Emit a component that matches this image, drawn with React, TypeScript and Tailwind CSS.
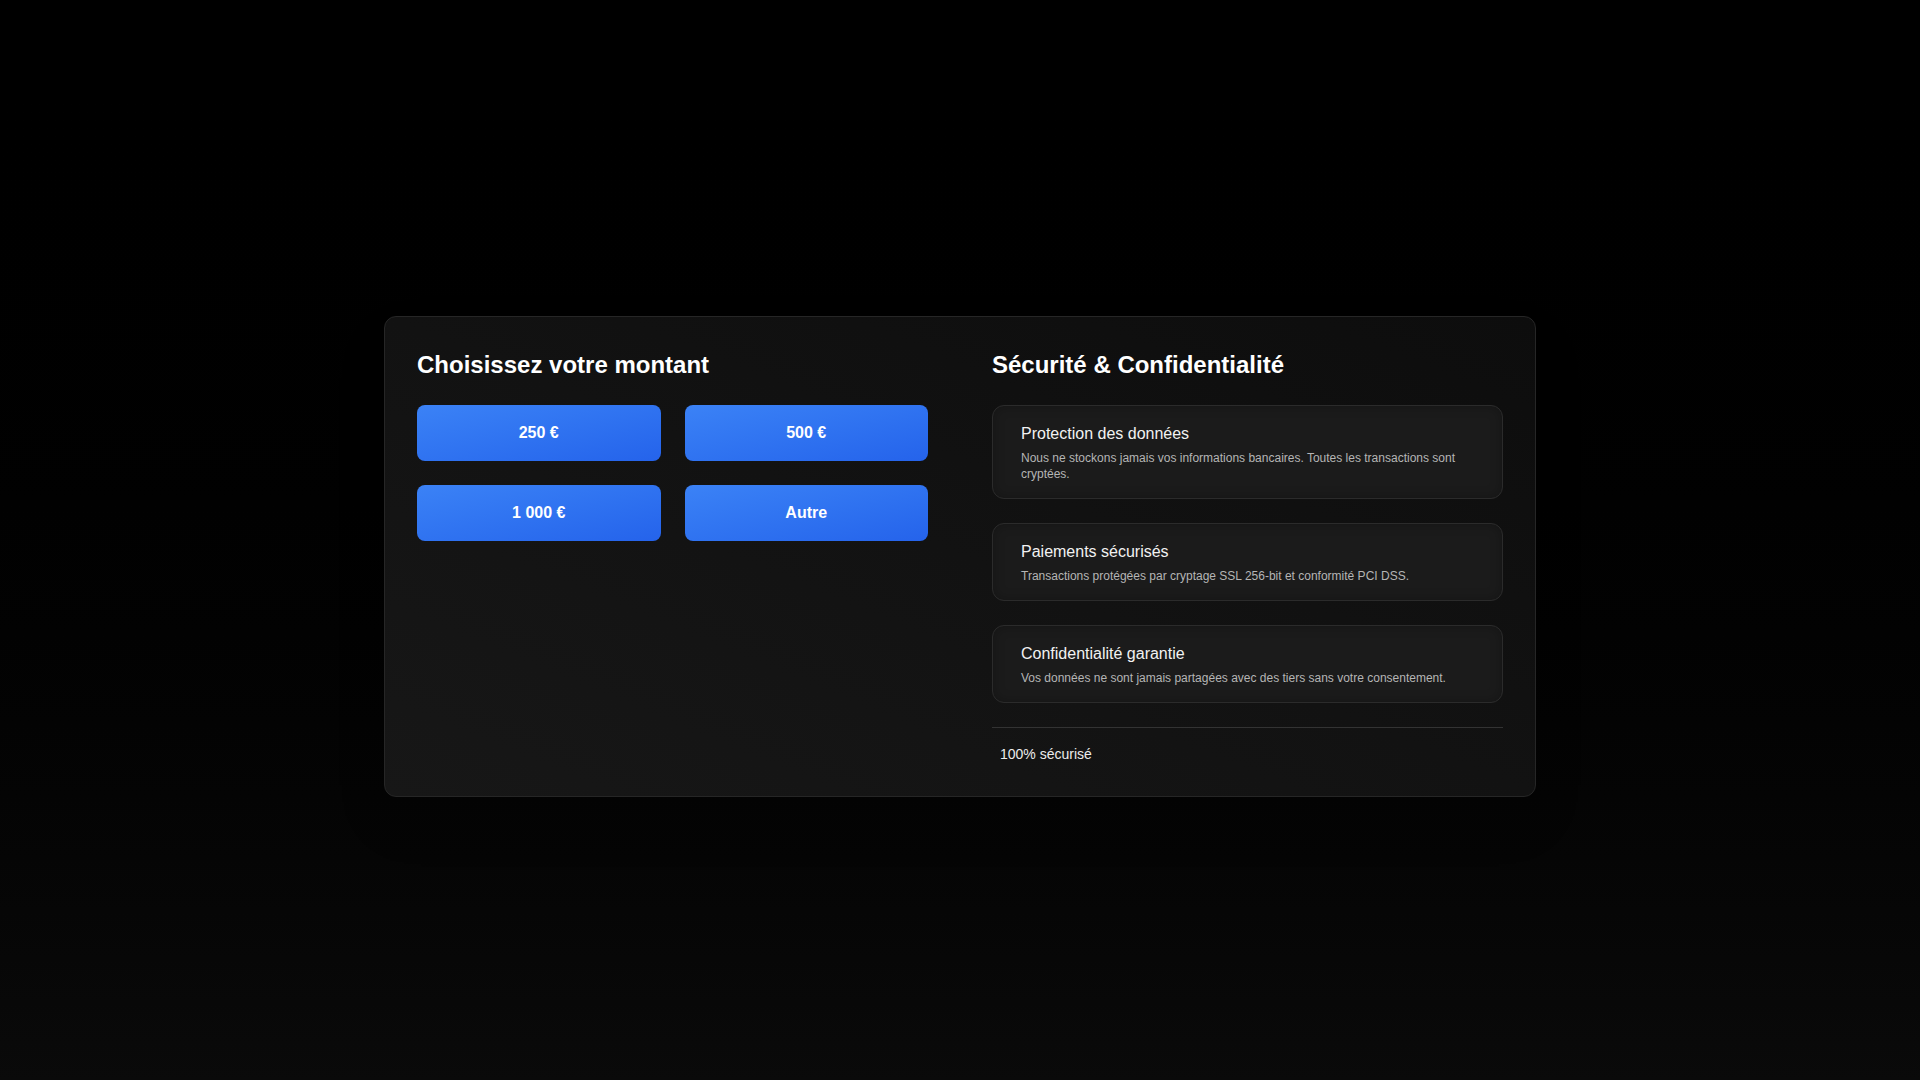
import React from "react";

const amounts = ["250 €", "500 €", "1 000 €", "Autre"];

const features = [
  {
    title: "Protection des données",
    desc: "Nous ne stockons jamais vos informations bancaires. Toutes les transactions sont cryptées.",
  },
  {
    title: "Paiements sécurisés",
    desc: "Transactions protégées par cryptage SSL 256-bit et conformité PCI DSS.",
  },
  {
    title: "Confidentialité garantie",
    desc: "Vos données ne sont jamais partagées avec des tiers sans votre consentement.",
  },
];

export default function App() {
  return (
    <div
      className="min-h-screen w-full bg-gradient-to-b from-[#000000] to-[#0a0a0a] flex items-center justify-center pt-8"
      style={{ fontFamily: '"Liberation Sans", Arial, sans-serif' }}
    >
      <div className="w-[1152px] rounded-xl border border-[#262626] bg-gradient-to-bl from-[#0d0d0d] via-[#121212] to-[#171717] p-8 shadow-2xl">
        <div className="grid grid-cols-2 gap-16">
          <div>
            <h2 className="text-2xl font-bold text-white mb-6">Choisissez votre montant</h2>
            <div className="grid grid-cols-2 gap-6">
              {amounts.map((a) => (
                <button
                  key={a}
                  className="py-4 rounded-lg bg-gradient-to-br from-[#3b82f6] to-[#2563eb] text-white text-base font-bold leading-6"
                >
                  {a}
                </button>
              ))}
            </div>
          </div>
          <div>
            <h2 className="text-2xl font-bold text-white mb-6">Sécurité &amp; Confidentialité</h2>
            <div className="flex flex-col gap-6">
              {features.map((f) => (
                <div
                  key={f.title}
                  className="flex gap-3 rounded-xl border border-[#2b2b2b] bg-[#1b1b1b] p-4 shadow-[inset_0_0_12px_rgba(0,0,0,0.25)]"
                >
                  <div className="w-0" />
                  <div className="flex-1">
                    <h3 className="text-base text-[#f2f2f2]">{f.title}</h3>
                    <p className="mt-1 text-xs text-[#b5b5b5]">{f.desc}</p>
                  </div>
                </div>
              ))}
            </div>
            <div className="mt-6 border-t border-[#333333] pt-4 flex items-center gap-2">
              <span className="w-0" />
              <span className="text-sm text-[#ececec]">100% sécurisé</span>
            </div>
          </div>
        </div>
      </div>
    </div>
  );
}
